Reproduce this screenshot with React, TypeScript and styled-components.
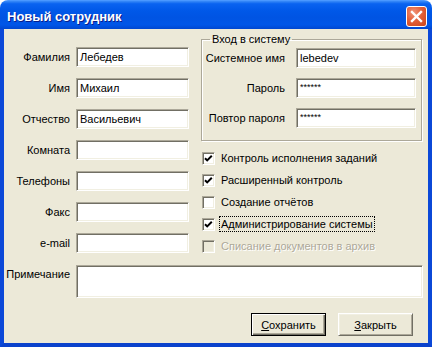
import * as React from "react";
import styled, { createGlobalStyle } from "styled-components";

const GlobalStyle = createGlobalStyle`
  html, body {
    margin: 0;
    padding: 0;
    background: #ffffff;
  }
  * {
    box-sizing: border-box;
  }
`;

const leftFields = [
  { label: "Фамилия", value: "Лебедев" },
  { label: "Имя", value: "Михаил" },
  { label: "Отчество", value: "Васильевич" },
  { label: "Комната", value: "" },
  { label: "Телефоны", value: "" },
  { label: "Факс", value: "" },
  { label: "e-mail", value: "" },
];

const loginFields = [
  { label: "Системное имя", value: "lebedev", secret: false },
  { label: "Пароль", value: "******", secret: true },
  { label: "Повтор пароля", value: "******", secret: true },
];

const rights = [
  { label: "Контроль исполнения заданий", checked: true },
  { label: "Расширенный контроль", checked: true },
  { label: "Создание отчётов", checked: false },
  { label: "Администрирование системы", checked: true, focused: true },
  { label: "Списание документов в архив", checked: false, disabled: true },
];

export default function App() {
  return (
    <>
      <GlobalStyle />
      <Window>
        <TitleBar>
          <Title>Новый сотрудник</Title>
          <CloseButton>
            <svg width="21" height="21" viewBox="0 0 21 21">
              <path
                d="M6 6L15 15M15 6L6 15"
                stroke="#ffffff"
                strokeWidth="2.4"
                strokeLinecap="square"
              />
            </svg>
          </CloseButton>
        </TitleBar>

        <Body>
          <TopSection>
            <PersonForm>
              {leftFields.map((f) => (
                <React.Fragment key={f.label}>
                  <FieldLabel>{f.label}</FieldLabel>
                  <TextBox>{f.value}</TextBox>
                </React.Fragment>
              ))}
            </PersonForm>

            <RightPane>
              <GroupBox>
                <GroupLegend>Вход в систему</GroupLegend>
                <LoginGrid>
                  {loginFields.map((f) => (
                    <React.Fragment key={f.label}>
                      <FieldLabel>{f.label}</FieldLabel>
                      <TextBox $secret={f.secret}>{f.value}</TextBox>
                    </React.Fragment>
                  ))}
                </LoginGrid>
              </GroupBox>

              <CheckList>
                {rights.map((r) => (
                  <CheckRow key={r.label} $disabled={r.disabled}>
                    <CheckBox $disabled={r.disabled}>
                      {r.checked && (
                        <svg width="9" height="9" viewBox="0 0 9 9">
                          <path
                            d="M1 4.2L3.2 6.4L7.8 1.8"
                            stroke="#000000"
                            strokeWidth="2"
                            fill="none"
                          />
                        </svg>
                      )}
                    </CheckBox>
                    <CheckText $focused={r.focused}>{r.label}</CheckText>
                  </CheckRow>
                ))}
              </CheckList>
            </RightPane>
          </TopSection>

          <NoteRow>
            <NoteLabel>Примечание</NoteLabel>
            <NoteBox />
          </NoteRow>

          <ButtonRow>
            <DialogButton $default>
              <u>С</u>охранить
            </DialogButton>
            <DialogButton>
              <u>З</u>акрыть
            </DialogButton>
          </ButtonRow>
        </Body>
      </Window>
    </>
  );
}

const Window = styled.div`
  width: 432px;
  height: 347px;
  display: flex;
  flex-direction: column;
  border-radius: 8px 8px 0 0;
  overflow: hidden;
  font-family: "Liberation Sans", Arial, sans-serif;
  font-size: 11px;
  color: #000000;
`;

const TitleBar = styled.div`
  height: 29px;
  flex-shrink: 0;
  display: flex;
  align-items: center;
  justify-content: space-between;
  padding: 0 5px 0 7px;
  background: linear-gradient(
    180deg,
    #3b8cf8 0%,
    #0a63f0 10%,
    #0058e8 35%,
    #0054e3 60%,
    #0056e8 85%,
    #0047d0 100%
  );
  border-top: 1px solid #4a98ff;
`;

const Title = styled.span`
  color: #ffffff;
  font-weight: bold;
  font-size: 13px;
  text-shadow: 1px 1px 0 #0a1e8a;
  padding-top: 2px;
`;

const CloseButton = styled.div`
  width: 21px;
  height: 21px;
  border: 1px solid #ffffff;
  border-radius: 3px;
  margin-top: 2px;
  display: flex;
  align-items: center;
  justify-content: center;
  background: radial-gradient(
    circle at 35% 30%,
    #f0957a 0%,
    #e2603a 45%,
    #cc4418 100%
  );

  svg {
    margin: -1px;
  }
`;

const Body = styled.div`
  flex: 1;
  display: flex;
  flex-direction: column;
  background: #ece9d8;
  border-left: 4px solid #0b48d8;
  border-right: 4px solid #0b48d8;
  border-bottom: 4px solid #0b42cc;
  padding: 4px 0 0 0;
`;

const TopSection = styled.div`
  display: flex;
  align-items: flex-start;
  gap: 12px;
`;

const PersonForm = styled.div`
  display: grid;
  grid-template-columns: 66px 113px;
  grid-auto-rows: 20px;
  column-gap: 6px;
  row-gap: 11px;
  margin-top: 14px;
`;

const FieldLabel = styled.span`
  align-self: center;
  text-align: right;
  white-space: nowrap;
`;

const TextBox = styled.div<{ $secret?: boolean }>`
  height: 20px;
  background: #ffffff;
  border: 1px solid;
  border-color: #aca899 #ffffff #ffffff #aca899;
  box-shadow:
    inset 1px 1px 0 #716f64,
    inset -1px -1px 0 #f1efe2;
  padding: ${(p) => (p.$secret ? "2px 3px 0" : "3px 3px 0")};
  font-size: ${(p) => (p.$secret ? "9px" : "11px")};
  line-height: 13px;
  white-space: nowrap;
  overflow: hidden;
`;

const RightPane = styled.div`
  width: 221px;
  display: flex;
  flex-direction: column;
`;

const GroupBox = styled.fieldset`
  margin: 0;
  padding: 2px 5px 12px 3px;
  border: 1px solid #aca899;
  box-shadow:
    inset 1px 1px 0 #ffffff,
    1px 1px 0 #ffffff;
  height: 108px;
`;

const GroupLegend = styled.legend`
  padding: 0 2px;
  margin-left: 5px;
  line-height: 13px;
`;

const LoginGrid = styled.div`
  display: grid;
  grid-template-columns: 80px 120px;
  grid-auto-rows: 20px;
  column-gap: 11px;
  row-gap: 10px;
`;

const CheckList = styled.div`
  display: flex;
  flex-direction: column;
  margin-top: 6px;
`;

const CheckRow = styled.div<{ $disabled?: boolean }>`
  height: 22px;
  display: flex;
  align-items: center;
  gap: 6px;
  padding-left: 1px;
  color: ${(p) => (p.$disabled ? "#aca899" : "#000000")};
  text-shadow: ${(p) => (p.$disabled ? "1px 1px 0 #ffffff" : "none")};
`;

const CheckBox = styled.div<{ $disabled?: boolean }>`
  width: 13px;
  height: 13px;
  flex-shrink: 0;
  display: flex;
  align-items: center;
  justify-content: center;
  background: ${(p) => (p.$disabled ? "#ece9d8" : "#ffffff")};
  border: 1px solid;
  border-color: #aca899 #ffffff #ffffff #aca899;
  box-shadow:
    inset 1px 1px 0 #716f64,
    inset -1px -1px 0 #f1efe2;
`;

const CheckText = styled.span<{ $focused?: boolean }>`
  white-space: nowrap;
  line-height: 14px;
  padding: 0 1px;
  margin-left: -1px;
  outline: ${(p) => (p.$focused ? "1px dotted #000000" : "none")};
`;

const NoteRow = styled.div`
  display: grid;
  grid-template-columns: 66px 347px;
  column-gap: 6px;
  margin-top: 8px;
`;

const NoteLabel = styled.span`
  text-align: right;
  padding-top: 3px;
  white-space: nowrap;
`;

const NoteBox = styled(TextBox)`
  height: 33px;
`;

const ButtonRow = styled.div`
  display: flex;
  justify-content: flex-end;
  gap: 12px;
  padding-right: 15px;
  margin-top: 15px;
`;

const DialogButton = styled.div<{ $default?: boolean }>`
  width: 75px;
  height: 23px;
  display: flex;
  align-items: center;
  justify-content: center;
  background: #ece9d8;
  border: 1px solid;
  border-color: ${(p) =>
    p.$default ? "#000000" : "#ffffff #716f64 #716f64 #ffffff"};
  box-shadow: ${(p) =>
    p.$default
      ? "inset 1px 1px 0 #ffffff, inset -1px -1px 0 #716f64, inset -2px -2px 0 #aca899"
      : "inset 1px 1px 0 #f1efe2, inset -1px -1px 0 #aca899"};

  u {
    text-decoration: underline;
  }
`;
